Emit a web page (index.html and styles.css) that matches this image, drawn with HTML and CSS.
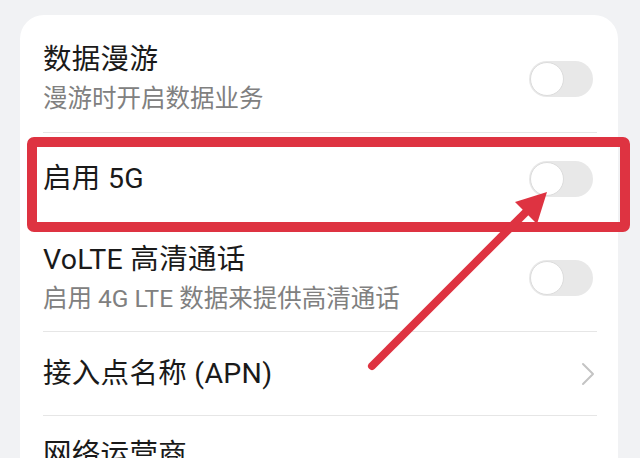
FILE: index.html
```html
<!DOCTYPE html>
<html lang="zh-CN">
<head>
<meta charset="utf-8">
<title>移动网络</title>
<link rel="stylesheet" href="styles.css">
</head>
<body>
<div class="card">
  <div class="row row-two first">
    <div class="texts">
      <div class="title">数据漫游</div>
      <div class="sub">漫游时开启数据业务</div>
    </div>
    <div class="toggle"><span class="knob"></span></div>
  </div>
  <div class="row row-one r5g">
    <div class="texts">
      <div class="title">启用 5G</div>
    </div>
    <div class="toggle"><span class="knob"></span></div>
  </div>
  <div class="row row-two">
    <div class="texts">
      <div class="title">VoLTE 高清通话</div>
      <div class="sub">启用 4G LTE 数据来提供高清通话</div>
    </div>
    <div class="toggle"><span class="knob"></span></div>
  </div>
  <div class="row row-one apn">
    <div class="texts">
      <div class="title">接入点名称 (APN)</div>
    </div>
    <svg class="chev" width="14" height="24" viewBox="0 0 14 24"><path d="M2 2 L12 12 L2 22" fill="none" stroke="#c4c4c4" stroke-width="2" stroke-linecap="round" stroke-linejoin="round"/></svg>
  </div>
  <div class="row row-one last">
    <div class="texts">
      <div class="title">网络运营商</div>
    </div>
  </div>
</div>
<div class="highlight"></div>
<svg class="arrow" width="640" height="458" viewBox="0 0 640 458">
  <line x1="372" y1="366" x2="528" y2="210" stroke="#de3341" stroke-width="8" stroke-linecap="round"/>
  <polygon points="547,192 515,202 537,224" fill="#de3341"/>
</svg>
</body>
</html>
```

FILE: styles.css
```css
html, body {
  margin: 0;
  padding: 0;
}
body {
  background: #f1f2f4;
  width: 640px;
  height: 458px;
  overflow: hidden;
  position: relative;
  font-family: "Roboto", "Noto Sans CJK SC", sans-serif;
}
.card {
  margin: 15px 22px 0 20px;
  background: #ffffff;
  border-radius: 24px 24px 0 0;
  padding: 10px 21px 0 23px;
}
.row {
  display: flex;
  align-items: center;
  justify-content: space-between;
  border-bottom: 1px solid #e6e6e6;
  box-sizing: border-box;
}
.row-two.first { height: 108px; }
.row-two { height: 107px; }
.r5g { height: 92px; }
.apn { height: 84px; }
.last { height: 80px; border-bottom: none; align-items: flex-start; padding-top: 22px; }
.title {
  font-size: 28.5px;
  line-height: 34px;
  color: #1a1a1a;
  letter-spacing: 0.3px;
}
.sub {
  font-size: 24.5px;
  line-height: 30px;
  margin-top: 7px;
  color: #808080;
}
.toggle {
  width: 64px;
  height: 36px;
  border-radius: 18px;
  background: #e8e8e8;
  margin-right: 4px;
  position: relative;
  flex: none;
}
.knob {
  position: absolute;
  left: 1px;
  top: 1px;
  width: 32px;
  height: 32px;
  border-radius: 50%;
  background: #ffffff;
  border: 1px solid #dcdcdc;
}
.chev {
  margin-right: 2px;
  flex: none;
}
.highlight {
  position: absolute;
  left: 27px;
  top: 137px;
  width: 603px;
  height: 95px;
  box-sizing: border-box;
  border: 10px solid #de3341;
  border-radius: 7px;
}
.arrow {
  position: absolute;
  left: 0;
  top: 0;
}
```
